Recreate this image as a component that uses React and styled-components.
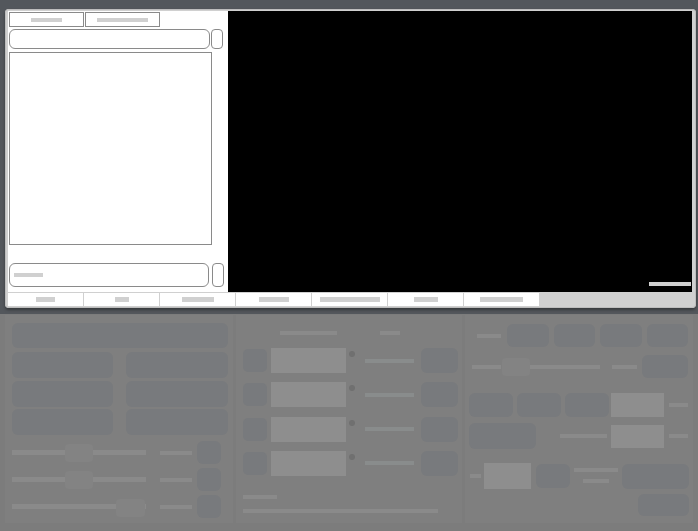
import React from "react";
import styled, { createGlobalStyle } from "styled-components";

const Global = createGlobalStyle`
  html, body { margin: 0; padding: 0; }
  body {
    width: 698px; height: 531px; overflow: hidden;
    background: #7c7c7c;
    font-family: "Liberation Sans", Arial, sans-serif;
  }
`;

const Page = styled.div`
  width: 698px; height: 531px;
  display: flex; flex-direction: column;
`;

const TopArea = styled.div`
  height: 314px;
  background: #53575c;
  padding: 9px 0 0 5px;
  box-sizing: border-box;
`;

const Window = styled.div`
  width: 691px; height: 299px;
  box-sizing: border-box;
  background: #d0d0d0;
  border-radius: 4px;
  padding: 2px 4px 2px 3px;
  box-shadow: 0 2px 3px rgba(0,0,0,0.35), inset 0 0 0 1px #bdbdbd;
  display: flex; flex-direction: column;
`;

const Content = styled.div`
  height: 281px;
  display: flex;
`;

const Side = styled.div`
  width: 220px;
  background: #fff;
  box-sizing: border-box;
  padding: 1px 0 0 1px;
  display: flex; flex-direction: column;
`;

const Video = styled.div`
  flex: 1;
  background: #000;
  position: relative;
`;

const Caption = styled.div`
  position: absolute;
  right: 1px; bottom: 6px;
  width: 42px; height: 4px;
  background: #d0d0d0;
`;

const TabRow = styled.div`
  display: flex; gap: 1px;
`;

const Tab = styled.div`
  width: 75px; height: 15px;
  box-sizing: border-box;
  border: 1px solid #8a8a8a;
  display: flex; align-items: center; justify-content: center;
`;

const Ph = styled.div`
  width: ${p => p.$w}px;
  height: ${p => p.$h || 4}px;
  background: #d0d0d0;
`;

const InputRow = styled.div`
  display: flex;
  gap: ${p => p.$gap}px;
  margin-top: ${p => p.$mt}px;
  height: ${p => p.$h}px;
`;

const Input = styled.div`
  width: ${p => p.$w}px;
  box-sizing: border-box;
  border: 1px solid #8a8a8a;
  border-radius: 6px;
  display: flex; align-items: center;
  padding-left: 4px;
`;

const SmallBtn = styled.div`
  width: 12px;
  box-sizing: border-box;
  border: 1px solid #8a8a8a;
  border-radius: 4px;
`;

const Box = styled.div`
  margin-top: 3px;
  width: 203px; height: 193px;
  box-sizing: border-box;
  border: 1px solid #8a8a8a;
`;

const BottomTabs = styled.div`
  margin-top: 1px;
  height: 13px;
  display: flex; gap: 1px;
`;

const BottomTab = styled.div`
  width: 75px;
  background: #fff;
  display: flex; align-items: center; justify-content: center;
`;

const Lower = styled.div`
  flex: 1;
  display: grid;
  grid-template-columns: 228px 226px 228px;
  column-gap: 3px;
  padding: 1px 0 0 5px;
  align-items: start;
`;

const Panel = styled.div`
  height: 208px;
  box-sizing: border-box;
  background: #7f7f7f;
  padding: ${p => p.$pad};
  display: flex; flex-direction: column;
`;

const Block = styled.div`
  width: ${p => (p.$w ? p.$w + "px" : "auto")};
  height: ${p => p.$h}px;
  margin-left: ${p => p.$ml || 0}px;
  margin-top: ${p => p.$mt || 0}px;
  flex: none;
  background: #787a7d;
  border-radius: ${p => p.$r || 6}px;
`;

const Bar = styled.div`
  width: ${p => p.$w}px;
  height: ${p => p.$h || 4}px;
  margin-left: ${p => p.$ml || 0}px;
  margin-top: ${p => p.$mt || 0}px;
  flex: none;
  background: ${p => p.$c || "#8a8a8a"};
`;

const Rect = styled.div`
  width: ${p => p.$w}px;
  height: ${p => p.$h}px;
  margin-left: ${p => p.$ml || 0}px;
  flex: none;
  background: #8e8e8e;
`;

const Thumb = styled.div`
  width: ${p => p.$w}px;
  height: ${p => p.$h}px;
  margin-left: ${p => p.$ml || 0}px;
  flex: none;
  background: #838383;
  border-radius: 4px;
`;

const Grid2 = styled.div`
  margin-top: 4px;
  display: grid;
  grid-template-columns: 101px 102px;
  column-gap: 13px;
  row-gap: 2.5px;
  grid-auto-rows: 26px;
`;

const Controls = styled.div`
  margin-top: 6px;
  display: flex; flex-direction: column; gap: 4px;
`;

const ControlRow = styled.div`
  height: 23px;
  display: flex; align-items: center;
`;

const Slider = styled.div`
  width: 134px; height: 23px;
  display: flex; align-items: center;
  position: relative;
`;

const SliderThumb = styled(Thumb)`
  position: absolute;
  left: ${p => p.$left}px;
  top: 4px;
`;

const Row = styled.div`
  display: flex;
  align-items: ${p => p.$align || "center"};
  height: ${p => p.$h}px;
  margin-top: ${p => p.$mt || 0}px;
  justify-content: ${p => p.$justify || "flex-start"};
`;

const Dot = styled.div`
  width: 6px; height: 6px;
  border-radius: 50%;
  background: #707070;
  align-self: flex-start;
  margin: 3px 0 0 3px;
  flex: none;
`;

const Stack = styled.div`
  display: flex; flex-direction: column;
  margin-left: ${p => p.$ml}px;
  align-self: flex-start;
  padding-top: 5px;
`;

const Rows = styled.div`
  margin-top: 13px;
  display: flex; flex-direction: column; gap: 9.3px;
`;

export default function App() {
  const bottomTabs = [19, 14, 32, 30, 60, 24, 43];
  return (
    <Page>
      <Global />
      <TopArea>
        <Window>
          <Content>
            <Side>
              <TabRow>
                <Tab><Ph $w={31} /></Tab>
                <Tab><Ph $w={51} /></Tab>
              </TabRow>
              <InputRow $gap={1} $mt={2} $h={20}>
                <Input $w={201} />
                <SmallBtn />
              </InputRow>
              <Box />
              <InputRow $gap={3} $mt={18} $h={24}>
                <Input $w={200}><Ph $w={29} /></Input>
                <SmallBtn />
              </InputRow>
            </Side>
            <Video>
              <Caption />
            </Video>
          </Content>
          <BottomTabs>
            {bottomTabs.map((w, i) => (
              <BottomTab key={i}><Ph $w={w} $h={5} /></BottomTab>
            ))}
          </BottomTabs>
        </Window>
      </TopArea>

      <Lower>
        <Panel $pad="8px 5px 0 7px">
          <Block $h={25} />
          <Grid2>
            <Block $h={26} />
            <Block $h={26} />
            <Block $h={26} />
            <Block $h={26} />
            <Block $h={26} />
            <Block $h={26} />
          </Grid2>
          <Controls>
            <ControlRow>
              <Slider>
                <Bar $w={53} $h={5} />
                <Thumb $w={28} $h={18} />
                <Bar $w={53} $h={5} />
              </Slider>
              <Bar $w={32} $ml={14} />
              <Block $w={24} $h={23} $ml={5} />
            </ControlRow>
            <ControlRow>
              <Slider>
                <Bar $w={53} $h={5} />
                <Thumb $w={28} $h={18} />
                <Bar $w={53} $h={5} />
              </Slider>
              <Bar $w={32} $ml={14} />
              <Block $w={24} $h={23} $ml={5} />
            </ControlRow>
            <ControlRow>
              <Slider>
                <Bar $w={134} $h={5} />
                <SliderThumb $w={29} $h={18} $left={104} />
              </Slider>
              <Bar $w={32} $ml={14} />
              <Block $w={24} $h={23} $ml={5} />
            </ControlRow>
          </Controls>
        </Panel>

        <Panel $pad="16px 0 0 7px">
          <Row $h={4}>
            <Bar $w={57} $ml={37} />
            <Bar $w={20} $ml={43} />
          </Row>
          <Rows>
            {[0, 1, 2, 3].map(i => (
              <Row key={i} $h={25}>
                <Block $w={24} $h={23} $r={5} />
                <Rect $w={75} $h={25} $ml={4} />
                <Dot />
                <Bar $w={49} $ml={10} $c="#898c8c" />
                <Block $w={37} $h={25} $ml={7} />
              </Row>
            ))}
          </Rows>
          <Bar $w={34} $mt={19} />
          <Bar $w={195} $mt={10} />
        </Panel>

        <Panel $pad="9px 4px 0 4px">
          <Row $h={23}>
            <Bar $w={24} $ml={8} />
            <Block $w={41.5} $h={23} $ml={6} />
            <Block $w={41.5} $h={23} $ml={5} />
            <Block $w={41.5} $h={23} $ml={5} />
            <Block $w={41.5} $h={23} $ml={5} />
          </Row>
          <Row $h={23} $mt={8}>
            <Bar $w={29} $ml={3} />
            <Thumb $w={28} $h={18} $ml={1} />
            <Bar $w={70} />
            <Bar $w={25} $ml={12} />
            <Block $w={46} $h={23} $ml={5} />
          </Row>
          <Row $h={24} $mt={15}>
            <Block $w={44} $h={24} />
            <Block $w={44} $h={24} $ml={4} />
            <Block $w={44} $h={24} $ml={4} />
            <Rect $w={53} $h={24} $ml={2} />
            <Bar $w={19} $ml={5} />
          </Row>
          <Row $h={26} $mt={6}>
            <Block $w={67} $h={26} />
            <Bar $w={47} $ml={24} />
            <Rect $w={53} $h={23} $ml={4} />
            <Bar $w={19} $ml={5} />
          </Row>
          <Row $h={26} $mt={14}>
            <Bar $w={11} $ml={1} />
            <Rect $w={47} $h={26} $ml={3} />
            <Block $w={34} $h={24} $ml={5} />
            <Stack $ml={4}>
              <Bar $w={44} />
              <Bar $w={26} $ml={9} $mt={7} />
            </Stack>
            <Block $w={67} $h={25} $ml={4} />
          </Row>
          <Row $h={22} $mt={5} $justify="flex-end">
            <Block $w={51} $h={22} />
          </Row>
        </Panel>
      </Lower>
    </Page>
  );
}
